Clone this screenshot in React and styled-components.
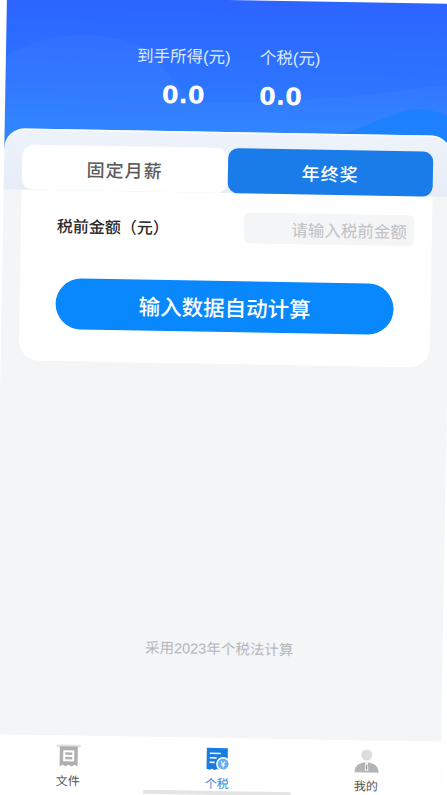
import React from 'react'
import styled, { createGlobalStyle } from 'styled-components'

const Global = createGlobalStyle`
  html, body {
    margin: 0;
    padding: 0;
    width: 447px;
    height: 795px;
    overflow: hidden;
    background: #fff;
    font-family: "Noto Sans CJK SC", "Liberation Sans", sans-serif;
  }
`

const Frame = styled.div`
  width: 447px;
  height: 795px;
  display: flex;
  flex-direction: column;
  background: #f4f5f7;
  transform: rotate(1deg);
  transform-origin: 223.5px 397.5px;
`

const Hero = styled.header`
  position: relative;
  height: 152px;
  flex: none;
  padding: 46px 0 0 131px;
  box-sizing: border-box;
  display: flex;
  gap: 29px;
  overflow: hidden;
  background: linear-gradient(180deg, #2c64ff 0%, #2c76ff 60%, #2b88ff 100%);
`

const Waves = styled.svg`
  position: absolute;
  left: 0;
  top: 0;
`

const Stat = styled.div`
  position: relative;
  width: ${p => (p.$center ? '94px' : 'auto')};
  display: flex;
  flex-direction: column;
  align-items: ${p => (p.$center ? 'center' : 'flex-start')};
  gap: 12px;
`

const StatLabel = styled.div`
  font-size: 16.5px;
  line-height: 22px;
  color: #dce8ff;
  white-space: nowrap;
  font-family: "Liberation Sans", "Noto Sans CJK SC", sans-serif;
`

const StatValue = styled.div`
  font-family: "DejaVu Sans", sans-serif;
  font-weight: 700;
  font-size: 24px;
  line-height: 30px;
  color: #fff;
  transform: translateY(1px);
`

const TabShell = styled.div`
  position: relative;
  flex: none;
  margin-top: -20px;
  height: 61px;
  box-sizing: border-box;
  padding: 16px 18px 0;
  display: flex;
  border-radius: 20px 20px 0 0;
  background: linear-gradient(180deg, #eef3fb 0%, #e6edf7 100%);
  box-shadow: inset 0 1.5px 1px rgba(255, 255, 255, 0.85);
`

const Tab = styled.div`
  flex: 1;
  display: flex;
  align-items: center;
  justify-content: center;
  font-size: 18px;
  letter-spacing: 1px;
  font-weight: 500;
  border-radius: ${p => (p.$active ? '10px' : '12px 12px 10px 10px')};
  color: ${p => (p.$active ? '#fff' : '#5c5c5c')};
  background: ${p => (p.$active ? '#197ce8' : '#fff')};
`

const Form = styled.section`
  flex: none;
  margin: 0 18px;
  height: 171px;
  box-sizing: border-box;
  padding: 19px 18px 0 36px;
  background: #fff;
  border-radius: 0 0 20px 20px;
`

const Row = styled.div`
  display: flex;
  align-items: center;
  justify-content: space-between;
`

const Label = styled.label`
  font-size: 16px;
  font-weight: 500;
  color: #2a2a2a;
`

const Input = styled.input`
  width: 170px;
  height: 31px;
  box-sizing: border-box;
  padding: 0 7px 0 0;
  border: 0;
  border-radius: 5px;
  background: #f4f5f7;
  text-align: right;
  font: inherit;
  font-size: 16.5px;
  &::placeholder {
    color: #c0c1c4;
    opacity: 1;
  }
`

const Submit = styled.button`
  display: block;
  width: 338px;
  height: 51px;
  margin-top: 38px;
  border: 0;
  border-radius: 26px;
  background: #0888fc;
  color: #fff;
  font: inherit;
  font-size: 21.5px;
  font-weight: 500;
`

const Note = styled.p`
  margin: auto 0 79px;
  text-align: center;
  font-size: 14.5px;
  line-height: 20px;
  color: #b4b7bc;
  font-family: "Liberation Sans", "Noto Sans CJK SC", sans-serif;
`

const Nav = styled.nav`
  position: relative;
  flex: none;
  height: 57px;
  display: flex;
  background: #fff;
`

const NavItem = styled.div`
  flex: 1;
  display: flex;
  flex-direction: column;
  align-items: center;
  padding-top: 9px;
  font-size: 12px;
  line-height: 16px;
  gap: 3px;
  color: ${p => (p.$active ? '#3a86e0' : '#555')};
`

const HomeBar = styled.div`
  position: absolute;
  left: 150px;
  bottom: 0;
  width: 148px;
  height: 4px;
  background: #e4e4e4;
  border-radius: 2px 2px 0 0;
`

const FileIcon = () => (
  <svg width="26" height="25" viewBox="0 0 26 25">
    <rect x="1" y="0" width="24" height="3" rx="1.5" fill="#e2e2e2" />
    <path d="M4 2h18v20l-3-1.6-3 1.6-3-1.6-3 1.6-3-1.6-3 1.6z" fill="#b0b0b0" />
    <rect x="7.5" y="6" width="11" height="11" fill="#fff" />
    <rect x="9.5" y="8" width="7" height="2.5" fill="#b0b0b0" />
    <rect x="9.5" y="12.5" width="7" height="2.5" fill="#b0b0b0" />
  </svg>
)

const TaxIcon = () => (
  <svg width="26" height="25" viewBox="0 0 26 25">
    <path d="M2 1h21v13l-4 9-2-1-2 1-2.500-1-2.500 1-2.500-1-2.500 1-3-1z" fill="#1a7be0" />
    <g stroke="#fff" strokeWidth="1.6">
      <path d="M5 6.500h11" />
      <path d="M5 11h7" />
      <path d="M5 15.500h5" />
    </g>
    <circle cx="18.500" cy="17" r="7" fill="#fff" />
    <circle cx="18.500" cy="17" r="5.500" fill="#6bb0f2" />
    <path d="M16.500 14.500l2 2.500 2-2.500M18.500 17v3.500M16.700 18h3.600" stroke="#fff" strokeWidth="1" fill="none" />
  </svg>
)

const UserIcon = () => (
  <svg width="26" height="25" viewBox="0 0 26 25">
    <circle cx="13" cy="5.500" r="5.500" fill="#dcdcdc" />
    <path d="M1 23c0-7 5-10 12-10s12 3 12 10z" fill="#b4b4b4" />
    <path d="M11.800 13h2.400l.6 8h-3.600z" fill="#fff" />
    <path d="M12.400 15h1.200l.3 5h-1.800z" fill="#9a9a9a" />
  </svg>
)

export default function App() {
  return (
    <>
      <Global />
      <Frame>
        <Hero>
          <Waves width="447" height="152" viewBox="0 0 447 152" fill="none">
            <path d="M0 60C40 34 90 32 130 46C165 66 170 98 200 102C280 104 370 92 447 80V152H0Z" fill="#fff" opacity="0.03" />
            <path d="M330 135C370 122 395 104 420 106C435 108 447 114 447 114V152H330Z" fill="#1580ff" opacity="0.7" />
          </Waves>
          <Stat $center>
            <StatLabel>到手所得(元)</StatLabel>
            <StatValue>0.0</StatValue>
          </Stat>
          <Stat>
            <StatLabel>个税(元)</StatLabel>
            <StatValue>0.0</StatValue>
          </Stat>
        </Hero>
        <TabShell>
          <Tab>固定月薪</Tab>
          <Tab $active>年终奖</Tab>
        </TabShell>
        <Form>
          <Row>
            <Label>税前金额（元）</Label>
            <Input placeholder="请输入税前金额" />
          </Row>
          <Submit type="button">输入数据自动计算</Submit>
        </Form>
        <Note>采用2023年个税法计算</Note>
        <Nav>
          <NavItem>
            <FileIcon />
            文件
          </NavItem>
          <NavItem $active>
            <TaxIcon />
            个税
          </NavItem>
          <NavItem>
            <UserIcon />
            我的
          </NavItem>
          <HomeBar />
        </Nav>
      </Frame>
    </>
  )
}
